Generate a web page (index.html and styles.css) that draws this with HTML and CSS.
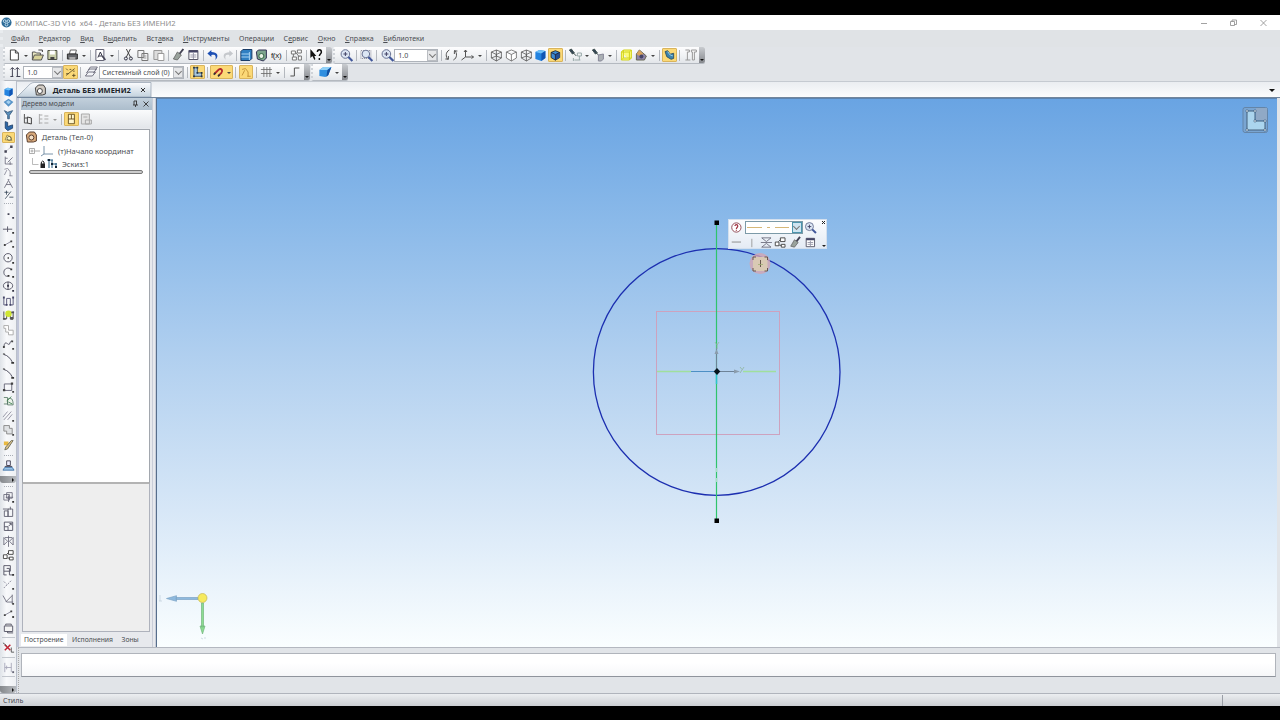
FILE: index.html
```
<!DOCTYPE html>
<html lang="ru">
<head>
  <meta charset="UTF-8" />
  <meta name="viewport" content="width=device-width, initial-scale=1.0"/>
  <title>КОМПАС-3D V16 x64 - Деталь БЕЗ ИМЕНИ2</title>
  <link rel="stylesheet" href="styles.css">
</head>
<body>

  <!-- icon set -->
  <svg class="defs" viewBox="0 0 14 14">
    <symbol id="new" viewBox="0 0 14 14"><path d="M3 2h5l3 3v7H3zM8 2v3h3" fill="#fff" stroke="#444"/></symbol>
    <symbol id="open" viewBox="0 0 14 14"><path d="M2 12V4h3l1 1h4v2" fill="#e8e6c0" stroke="#555"/><path d="M2 12l2-5h9l-2 5z" fill="#d8d39a" stroke="#555"/><path d="M8 2h4v2" fill="none" stroke="#444"/></symbol>
    <symbol id="save" viewBox="0 0 14 14"><path d="M2.500 2.500h9v9h-9z" fill="#c8cda8" stroke="#4d5045"/><path d="M4.500 2.500h5v4h-5z" fill="#fff"/><path d="M5 9h4v3H5z" fill="#444"/></symbol>
    <symbol id="print" viewBox="0 0 14 14"><path d="M5 2h6l-1 4H4z" fill="#fff" stroke="#666"/><path d="M2 6h10v5H2z" fill="#66686c" stroke="#333"/><path d="M4 9h6v3H4z" fill="#aaa"/></symbol>
    <symbol id="preview" viewBox="0 0 14 14"><path d="M2.500 1.500h8v11h-8z" fill="#fff" stroke="#667"/><path d="M4.500 9.500L7 4l2.500 5.500M5.500 8h3" fill="none" stroke="#334"/><path d="M9 8l3 4" stroke="#445" stroke-width="1.500"/></symbol>
    <symbol id="cut" viewBox="0 0 14 14"><path d="M5 1l4 8M9 1L5 9" stroke="#444" fill="none"/><circle cx="4.500" cy="10.500" r="1.500" fill="none" stroke="#334"/><circle cx="9.500" cy="10.500" r="1.500" fill="none" stroke="#334"/></symbol>
    <symbol id="copy" viewBox="0 0 14 14"><path d="M1.500 2.500h6v7h-6zM5.500 5.500h6v7h-6z" fill="#f4f4f6" stroke="#777"/><path d="M7 8h3M7 10h3" stroke="#999"/></symbol>
    <symbol id="paste" viewBox="0 0 14 14"><path d="M2.500 2.500h8v9h-8z" fill="#ddd" stroke="#999"/><path d="M6.500 5.500h6v7h-6z" fill="#fff" stroke="#999"/></symbol>
    <symbol id="brush" viewBox="0 0 14 14"><path d="M12 1L8 6" stroke="#445" stroke-width="2"/><path d="M6 4l4 3-4 5-4-1z" fill="#99a29c" stroke="#555" stroke-width=".7"/></symbol>
    <symbol id="table" viewBox="0 0 14 14"><path d="M2.500 2.500h9v9h-9z" fill="#fff" stroke="#556"/><path d="M2.500 3.500h9" stroke="#446" stroke-width="2"/><path d="M4 7h6M4 9h6M7 5v6" stroke="#99a"/></symbol>
    <symbol id="undo" viewBox="0 0 14 14"><path d="M5 2L1 5.500 5 9V7c4-1 5 1 4 5 4-4 2-8-4-8z" fill="#1c4fb4"/></symbol>
    <symbol id="redo" viewBox="0 0 14 14"><path d="M9 2l4 3.500L9 9V7C5 6 4 8 5 12 1 8 3 4 9 4z" fill="#c5c8cc"/></symbol>
    <symbol id="book" viewBox="0 0 14 14"><path d="M1.500 3.500l2-2h9v9l-2 2h-9z" fill="#2f7fc2" stroke="#1b3c66"/><path d="M2 6h8M2 9h8M10 4v8" stroke="#a8d4f4"/></symbol>
    <symbol id="gears" viewBox="0 0 14 14"><path d="M2 4l2-2h8v8l-3 3-6-2z" fill="#7da58e" stroke="#335"/><circle cx="7" cy="8" r="2.500" fill="#e8f2e4" stroke="#364"/></symbol>
    <symbol id="links" viewBox="0 0 14 14"><path d="M2 3h4v3H2zM8 2h4v3H8zM3 9h4v3H3zM9 8h3v4H9zM6 4l4 5M4 6v3" fill="#fff" stroke="#777"/></symbol>
    <symbol id="help" viewBox="0 0 14 14"><path d="M1 1v9l2-2 2 4 1-1-1-3h2z" fill="#111"/><path d="M8 4c0-3 4-3 4 0 0 2-2 2-2 4M10 10v2" fill="none" stroke="#111" stroke-width="1.500"/></symbol>
    <symbol id="zoom" viewBox="0 0 14 14"><circle cx="6" cy="6" r="4.300" fill="#dce6f4" stroke="#6a7494"/><path d="M9 9l4 4" stroke="#41579a" stroke-width="2.200"/><path d="M4 6h4M6 4v4" stroke="#446"/></symbol>
    <symbol id="zoomrect" viewBox="0 0 14 14"><path d="M1.500 2.500h10v8h-10z" fill="none" stroke="#889" stroke-dasharray="1 1"/><circle cx="6.500" cy="6" r="3.800" fill="#dce6f4" stroke="#6a7494"/><path d="M9 9l4 4" stroke="#41579a" stroke-width="2.200"/></symbol>
    <symbol id="rotate" viewBox="0 0 14 14"><path d="M5 2C1 4 1 9 4 12M9 12c4-2 4-7 1-10M1 11h3V8M13 3h-3v3" fill="none" stroke="#555"/></symbol>
    <symbol id="axes" viewBox="0 0 14 14"><path d="M5 2v7h8M5 9l-4 3M3.500 4L5 2l1.500 2M11 7.500L13 9l-2 1.500" fill="none" stroke="#555"/></symbol>
    <symbol id="wire" viewBox="0 0 14 14"><path d="M2 4l5-2 5 2v6l-5 3-5-3zM2 4l5 2.500L12 4M7 6.500V13M7 2v6l-5 2M7 8l5 2" fill="none" stroke="#555" stroke-width=".8"/></symbol>
    <symbol id="cube" viewBox="0 0 14 14"><path d="M2 4l5-2 5 2v6l-5 3-5-3zM2 4l5 2.500L12 4M7 6.500V13" fill="#fff" stroke="#666" stroke-width=".8"/></symbol>
    <symbol id="solid" viewBox="0 0 14 14"><path d="M2 4l4-2 6 1v7l-4 3-6-2z" fill="#2383e0"/><path d="M2 4l4-2 6 1-4 2.500z" fill="#6fc0f8"/><path d="M8 5.500L12 3v7l-4 3z" fill="#1155b4"/></symbol>
    <symbol id="shell" viewBox="0 0 14 14"><path d="M1 5l4-3h8l-3 8-3 2-6-1z" fill="#2f8fe0"/><path d="M1 5l4-3h8l-4 3z" fill="#8fd0f8"/><path d="M9 5l4-3-3 8-2 2z" fill="#124fa0"/></symbol>
    <symbol id="solidedge" viewBox="0 0 14 14"><path d="M2 4l5-2 5 2v6l-5 3-5-3z" fill="#3b8ad4" stroke="#222"/><path d="M7 6.500L12 4v6l-5 3z" fill="#234d92"/><path d="M2 4l5 2.500L12 4M7 6.500V13" fill="none" stroke="#223"/></symbol>
    <symbol id="pin1" viewBox="0 0 14 14"><path d="M1 2l2-1 3 4-2 1zM5 5l3 3" fill="#345" stroke="#455"/><path d="M9 5h4v3H9zM11 8v4M6 12h6M5 10v3" fill="none" stroke="#9aa"/></symbol>
    <symbol id="pin2" viewBox="0 0 14 14"><path d="M1 2l2-1 3 4-2 1zM5 5l2 2" fill="#345" stroke="#455"/><path d="M7 7l5-1v5l-2 2H7z" fill="#aab0b4" stroke="#889"/></symbol>
    <symbol id="yellow" viewBox="0 0 14 14"><path d="M2 4l2-2h8v8l-2 2H2zM2 4h8v8M10 4l2-2M4 2v8h8M4 10l-2 2" fill="#fbfb7a" stroke="#d2d21a"/></symbol>
    <symbol id="section" viewBox="0 0 14 14"><path d="M2 6l3-4 7 6-2 4H2z" fill="#8d84a8" stroke="#665"/><path d="M2 6l3-4 4 4-4 2z" fill="#d9a35c"/><circle cx="7" cy="8.500" r="2" fill="#446"/></symbol>
    <symbol id="part" viewBox="0 0 14 14"><path d="M2 3l3-1 3 4 4-1v6l-3 1-5-3z" fill="#3b82ac" stroke="#2a4c60"/><path d="M5 3l3 4 3 1" stroke="#a8dcf0" fill="none"/></symbol>
    <symbol id="caliper" viewBox="0 0 14 14"><path d="M2 2h4v2H4v8M8 2h5v2h-2v8H9V4H8zM2 12h5" fill="#f5f5f5" stroke="#999"/></symbol>
    <symbol id="step" viewBox="0 0 14 14"><path d="M4 3v9M9 3v9M2 4.500l2-2 2 2M7 4.500l2-2 2 2M2 11.500h3M8 11.500h4" fill="none" stroke="#445"/></symbol>
    <symbol id="snap" viewBox="0 0 14 14"><path d="M2 11l10-8M2 3l2 2M9 11h4M11 9v4M2 9h3M6 4h2M10 6h2" stroke="#5b4c28" fill="none"/></symbol>
    <symbol id="layers" viewBox="0 0 14 14"><path d="M1 11l3-4h7l-3 4zM2 8l3-4h7l-3 4M4 5l2-3h7l-2 3" fill="#f2f4f8" stroke="#667" stroke-width=".9"/></symbol>
    <symbol id="sketch" viewBox="0 0 14 14"><path d="M3 2v10h9V8H7V2z" fill="#a8c8e0" stroke="#345"/><path d="M2 1h2v2H2zM6 1h2v2H6zM6 7h2v2H6zM11 7h2v2h-2zM2 11h2v2H2zM11 11h2v2h-2z" fill="#234"/></symbol>
    <symbol id="magnet" viewBox="0 0 14 14"><path d="M3 9l5-5c3-2 5 2 3 4l-3 3" fill="none" stroke="#b4282a" stroke-width="2.200"/><path d="M2 10l2-2M7 12l2-2" stroke="#333" stroke-width="2"/></symbol>
    <symbol id="angle" viewBox="0 0 14 14"><path d="M2 4l4-1 3 4v5M5 5l-3 6M8 12h4" fill="none" stroke="#b8842a" stroke-width=".9"/></symbol>
    <symbol id="anglegrey" viewBox="0 0 14 14"><path d="M2 4l4-1 3 4v5M5 5l-3 6M8 12h4" fill="none" stroke="#778" stroke-width=".9"/></symbol>
    <symbol id="grid" viewBox="0 0 14 14"><path d="M4.500 2v10M7.500 2v10M10.500 2v10M1.500 4.500h11M1.500 8.500h11" stroke="#666" stroke-width=".8"/></symbol>
    <symbol id="ortho" viewBox="0 0 14 14"><path d="M3 11h4V3h5" fill="none" stroke="#555"/></symbol>
    <symbol id="surf" viewBox="0 0 14 14"><path d="M1 6l6-4 6 4-6 6z" fill="#5894c8"/><path d="M4 6l3-2 3 2-3 3z" fill="#a4d0f0"/></symbol>
    <symbol id="funnel" viewBox="0 0 14 14"><path d="M2 2l4 2 6-2-4 6v4H6V8z" fill="#5a92be" stroke="#357"/></symbol>
    <symbol id="bend" viewBox="0 0 14 14"><path d="M3 2l3 1v5l6-2v4l-6 3-3-3z" fill="#2b68aa" stroke="#1d3d66"/></symbol>
    <symbol id="geom" viewBox="0 0 14 14"><path d="M2 10l3-7 5 3 2 5z" fill="#fff8c0" stroke="#776633"/><circle cx="8" cy="8" r="3" fill="none" stroke="#554"/></symbol>
    <symbol id="pts" viewBox="0 0 14 14"><path d="M3 11l8-7" stroke="#778" stroke-dasharray="1 1"/><path d="M2 9h3v3H2zM9 3h3v3H9z" fill="#445"/></symbol>
    <symbol id="dims" viewBox="0 0 14 14"><path d="M3 2v9h9M6 9l6-6M3 4h3M9 8v4" fill="none" stroke="#667"/></symbol>
    <symbol id="compass" viewBox="0 0 14 14"><path d="M2 12l5-9 5 9M4 8h6M6 2h2" fill="none" stroke="#667"/></symbol>
    <symbol id="pm" viewBox="0 0 14 14"><path d="M2 4h5M4.500 2v5M3 12l7-9M8 10h5" stroke="#345" fill="none"/></symbol>
    <symbol id="dot" viewBox="0 0 14 14"><path d="M6 6h2v2H6zM11 10h2v2h-2z" fill="#445"/></symbol>
    <symbol id="hline" viewBox="0 0 14 14"><path d="M1 7h10M6 4v6" stroke="#556"/><path d="M11 10h2v2h-2z" fill="#333"/></symbol>
    <symbol id="seg" viewBox="0 0 14 14"><path d="M3 9l7-4" stroke="#889"/><path d="M2 8h2v2H2zM9 4h2v2H9zM11 10h2v2h-2z" fill="#444"/></symbol>
    <symbol id="circ" viewBox="0 0 14 14"><circle cx="6.500" cy="6.500" r="4.500" fill="none" stroke="#556"/><path d="M6 6h1.500v1.500H6zM11 11h2v2h-2z" fill="#333"/></symbol>
    <symbol id="arc" viewBox="0 0 14 14"><path d="M10 4C7 1 2 3 2 7s3 5 5 4" fill="none" stroke="#556"/><path d="M9 3h2v2H9zM6 10h2v2H6zM11 11h2v2h-2z" fill="#333"/></symbol>
    <symbol id="ell" viewBox="0 0 14 14"><ellipse cx="6.500" cy="6.500" rx="5" ry="4" fill="none" stroke="#556"/><path d="M6.500 2v9" stroke="#556"/><path d="M5.500 5.500h2v2h-2zM11 11h2v2h-2z" fill="#334"/></symbol>
    <symbol id="contour" viewBox="0 0 14 14"><path d="M2 3v8h3V4h4v7h3V3" fill="none" stroke="#557"/><path d="M1 2h2v2H1zM11 2h2v2h-2zM4 10h2v2H4zM8 10h2v2H8z" fill="#446"/></symbol>
    <symbol id="lime" viewBox="0 0 14 14"><path d="M2 3v8h3V5h4v6h3V3" fill="none" stroke="#444"/><circle cx="7" cy="5.500" r="3.500" fill="#d0e632"/><path d="M1 10h3v2H1zM9 9h3v3H9zM10 3h3v2h-3z" fill="#555"/></symbol>
    <symbol id="offset" viewBox="0 0 14 14"><path d="M2 2h5v5h5v5H7V9H4V5H2z" fill="#fff" stroke="#aaa"/></symbol>
    <symbol id="spline" viewBox="0 0 14 14"><path d="M2 10c1-9 5-1 6-3s1-4 3-3" fill="none" stroke="#556"/><path d="M1 9h2v2H1zM10 3h2v2h-2zM11 11h2v2h-2z" fill="#444"/></symbol>
    <symbol id="fillet" viewBox="0 0 14 14"><path d="M2 3c4 1 7 4 9 8" fill="none" stroke="#445"/><path d="M1 2h2v1H1zM10 11h3v2h-3z" fill="#333"/></symbol>
    <symbol id="rect" viewBox="0 0 14 14"><path d="M2.500 3.500h8v7h-8z" fill="none" stroke="#667"/><path d="M1 9h2.500v2.500H1zM9.500 2H12v2.500H9.500zM11 11h2v2h-2z" fill="#444"/></symbol>
    <symbol id="copyg" viewBox="0 0 14 14"><path d="M2 3h4v7H2M6 5c4-3 6 0 6 6H6z" fill="#eef3ec" stroke="#576" stroke-width=".9"/><path d="M5 7l5-5M7 8l4 2" stroke="#485"/></symbol>
    <symbol id="hatch" viewBox="0 0 14 14"><path d="M1 8l5-6M2 11l8-9M6 11l5-6" stroke="#889" stroke-width=".9"/><path d="M11 11h2v2h-2z" fill="#444"/></symbol>
    <symbol id="union" viewBox="0 0 14 14"><path d="M2 2h6v3h3v6H5V8H2z" fill="#e0e2e4" stroke="#888"/><path d="M11 11h2v2h-2z" fill="#444"/></symbol>
    <symbol id="pencil" viewBox="0 0 14 14"><path d="M2 3h5v4H2z" fill="#e9b941"/><path d="M12 2L6 11l-3 1 1-3 6-7z" fill="#d8c088" stroke="#665" stroke-width=".9"/></symbol>
    <symbol id="stamp" viewBox="0 0 14 14"><path d="M1 12l2-3h8l2 3z" fill="#9cc4e8" stroke="#47a"/><path d="M5 2h4v5H5zM3 8h8" fill="#eef" stroke="#445"/></symbol>
    <symbol id="mv" viewBox="0 0 14 14"><path d="M2 4h6v6H2zM5 2h6v6H5zM7 5v7M4 7h8" fill="none" stroke="#667" stroke-width=".9"/><path d="M11 11h2v2h-2z" fill="#333"/></symbol>
    <symbol id="rot" viewBox="0 0 14 14"><path d="M2.500 5.500h4v6h-4zM6.500 3.500h5v8h-5zM1 3.500h6M9 1v3" fill="none" stroke="#556" stroke-width=".9"/></symbol>
    <symbol id="scale" viewBox="0 0 14 14"><path d="M2.500 2.500h9v9h-9zM2.500 7.500h4v4M7 7l3-3M8 4h2v2" fill="none" stroke="#556"/></symbol>
    <symbol id="mirror" viewBox="0 0 14 14"><path d="M2 2h10L7 6zM2 12h10L7 8zM1 7h12" fill="none" stroke="#667" stroke-width=".9"/></symbol>
    <symbol id="mirrorv" viewBox="0 0 14 14"><path d="M2 3v8l4-4zM12 3v8L8 7zM3 3h8M7 1v12" fill="none" stroke="#667" stroke-width=".9"/></symbol>
    <symbol id="arr" viewBox="0 0 14 14"><path d="M7 2h5v4H7zM1.500 6.500h4v4h-4zM8 9h4v3H8zM5 6l2-2M6 10h2" fill="#fff" stroke="#444"/></symbol>
    <symbol id="deform" viewBox="0 0 14 14"><path d="M2 2h7v6H2zM5 5h3v7h4M2 8v4h3" fill="none" stroke="#556"/><path d="M11 11h2v2h-2z" fill="#333"/></symbol>
    <symbol id="trim" viewBox="0 0 14 14"><path d="M2 11l8-8M2 4l3 3" stroke="#889" stroke-dasharray="2 1"/><path d="M11 11h2v2h-2z" fill="#444"/></symbol>
    <symbol id="extend" viewBox="0 0 14 14"><path d="M1 3l4 7h7M11 2v10M4 10l7-7" fill="none" stroke="#667" stroke-width=".9"/><path d="M11 11h2v2h-2z" fill="#444"/></symbol>
    <symbol id="box" viewBox="0 0 14 14"><path d="M2.500 4.500h9v6h-9zM4 4V2.500h6V4M6 10v2h6" fill="#f4f4f4" stroke="#556"/></symbol>
    <symbol id="del" viewBox="0 0 14 14"><path d="M3 4l6 6M9 4l-6 6" stroke="#c02434" stroke-width="1.600"/><path d="M1 2l4 3M10 7v5h3" stroke="#555" fill="none"/></symbol>
    <symbol id="meas" viewBox="0 0 14 14"><path d="M3 2v10M10 2v10M3 7h7M5 5v4" stroke="#aab" fill="none"/><path d="M11 11h2v2h-2z" fill="#667"/></symbol>
    <symbol id="detail" viewBox="0 0 14 14"><path d="M2 5l3-3h5l2 3v6l-3 1H3z" fill="#d2ccc4" stroke="#444"/><circle cx="6.500" cy="8" r="2.500" fill="#fff" stroke="#444"/></symbol>
    <symbol id="tree" viewBox="0 0 14 14"><path d="M3 2v9h4M3 6h3" fill="none" stroke="#555"/><path d="M6 5l4 1v6l-4-1z" fill="#eee" stroke="#444"/></symbol>
    <symbol id="list" viewBox="0 0 14 14"><path d="M3 2v10M3 3h3M3 7h3M3 11h3M8 4h4M8 7h4M8 11h4" stroke="#aaa"/></symbol>
    <symbol id="doc" viewBox="0 0 14 14"><path d="M3.500 1.500h7v11h-7z" fill="#fff6cc" stroke="#5d4514"/><path d="M3.500 7h7M7 2v5" stroke="#5d4514"/></symbol>
    <symbol id="binoc" viewBox="0 0 14 14"><path d="M2 2h8v10H2zM4 5h4M6 8h6v4H6z" fill="#e4e4e4" stroke="#aaa"/></symbol>
  </svg>

  <div class="window">
    <div class="titlebar">
      <svg class="logo" viewBox="0 0 12 12"><circle cx="6" cy="6" r="5.500" fill="#2d6c98"/><circle cx="4" cy="4.500" r="1.500" fill="none" stroke="#cfe6f4"/><circle cx="8" cy="4.500" r="1.500" fill="none" stroke="#cfe6f4"/><circle cx="6" cy="8.300" r="1.500" fill="none" stroke="#cfe6f4"/></svg>
      <span class="title">КОМПАС-3D V16&nbsp; x64 - Деталь БЕЗ ИМЕНИ2</span>
      <svg class="winbtns" viewBox="0 0 70 10"><path d="M0 5.500h6M29.500 3.500h4v4h-4zM31 3.500V2h4.500v4.500h-2M59.500 2l6 6M65.500 2l-6 6" fill="none" stroke="#8a8a8a" stroke-width=".8"/></svg>
    </div>

    <div class="menubar">
      <span><u>Ф</u>айл</span><span><u>Р</u>едактор</span><span><u>В</u>ид</span><span>В<u>ы</u>делить</span><span>Вст<u>а</u>вка</span><span><u>И</u>нструменты</span><span>Операции</span><span>С<u>е</u>рвис</span><span><u>О</u>кно</span><span><u>С</u>правка</span><span><u>Б</u>иблиотеки</span>
    </div>

    <div class="toolrow">
      <div class="toolbar standard">
        <svg class="i"><use href="#new"/></svg><b class="dd"></b>
        <svg class="i"><use href="#open"/></svg>
        <svg class="i"><use href="#save"/></svg><b class="sep"></b>
        <svg class="i"><use href="#print"/></svg><b class="dd"></b><b class="sep"></b>
        <svg class="i"><use href="#preview"/></svg><b class="dd"></b><b class="sep"></b>
        <svg class="i"><use href="#cut"/></svg>
        <svg class="i"><use href="#copy"/></svg>
        <svg class="i"><use href="#paste"/></svg><b class="sep"></b>
        <svg class="i"><use href="#brush"/></svg>
        <svg class="i"><use href="#table"/></svg><b class="sep"></b>
        <svg class="i"><use href="#undo"/></svg>
        <svg class="i narrow"><use href="#redo"/></svg><b class="sep"></b>
        <svg class="i"><use href="#book"/></svg>
        <svg class="i"><use href="#gears"/></svg>
        <span class="fx">f(x)</span><b class="sep"></b>
        <svg class="i"><use href="#links"/></svg><b class="sep"></b>
        <svg class="i"><use href="#help"/></svg>
        <b class="cap"></b>
      </div>
      <div class="toolbar view">
        <svg class="i"><use href="#zoom"/></svg><b class="sep"></b>
        <svg class="i"><use href="#zoomrect"/></svg><b class="sep"></b>
        <svg class="i"><use href="#zoom"/></svg>
        <span class="combo scale">1.0<b class="drop"></b></span><b class="sep"></b>
        <svg class="i"><use href="#rotate"/></svg>
        <svg class="i wide"><use href="#axes"/></svg><b class="dd"></b><b class="sep"></b>
        <svg class="i"><use href="#wire"/></svg>
        <svg class="i"><use href="#cube"/></svg>
        <svg class="i"><use href="#wire"/></svg>
        <svg class="i"><use href="#solid"/></svg>
        <svg class="i on"><use href="#solidedge"/></svg><b class="sep"></b>
        <svg class="i"><use href="#pin1"/></svg><b class="dd"></b>
        <svg class="i"><use href="#pin2"/></svg><b class="dd"></b><b class="sep"></b>
        <svg class="i"><use href="#yellow"/></svg>
        <svg class="i"><use href="#section"/></svg><b class="dd"></b><b class="sep"></b>
        <svg class="i on"><use href="#part"/></svg><b class="sep"></b>
        <svg class="i"><use href="#caliper"/></svg>
        <b class="cap"></b>
      </div>
    </div>

    <div class="toolrow">
      <div class="toolbar current">
        <svg class="i"><use href="#step"/></svg>
        <span class="combo stepbox">1.0<b class="drop"></b></span>
        <svg class="i on"><use href="#snap"/></svg><b class="sep"></b>
        <svg class="i"><use href="#layers"/></svg>
        <span class="combo layer">Системный слой (0)<b class="drop"></b></span><b class="sep"></b>
        <svg class="i on"><use href="#sketch"/></svg><b class="sep"></b>
        <span class="i on split"><svg class="i"><use href="#magnet"/></svg><b class="dd"></b></span><b class="sep"></b>
        <svg class="i on"><use href="#angle"/></svg><b class="sep"></b>
        <svg class="i"><use href="#grid"/></svg><b class="dd"></b><b class="sep"></b>
        <svg class="i"><use href="#ortho"/></svg>
        <b class="cap"></b>
      </div>
      <div class="toolbar shade">
        <svg class="i"><use href="#shell"/></svg><b class="dd"></b>
        <b class="cap"></b>
      </div>
    </div>

    <div class="workspace">
      <div class="compact">
        <div class="switches">
          <svg class="s"><use href="#solid"/></svg>
          <svg class="s"><use href="#surf"/></svg>
          <svg class="s"><use href="#funnel"/></svg>
          <svg class="s"><use href="#bend"/></svg>
          <svg class="s on"><use href="#geom"/></svg>
          <svg class="s"><use href="#pts"/></svg>
          <svg class="s"><use href="#dims"/></svg>
          <svg class="s"><use href="#anglegrey"/></svg>
          <svg class="s"><use href="#compass"/></svg>
          <svg class="s"><use href="#pm"/></svg>
        </div>
        <b class="grip"></b>
        <div class="tools geometry">
          <svg class="s"><use href="#dot"/></svg>
          <svg class="s"><use href="#hline"/></svg>
          <svg class="s"><use href="#seg"/></svg>
          <svg class="s"><use href="#circ"/></svg>
          <svg class="s"><use href="#arc"/></svg>
          <svg class="s"><use href="#ell"/></svg>
          <svg class="s"><use href="#contour"/></svg>
          <svg class="s"><use href="#lime"/></svg>
          <svg class="s"><use href="#offset"/></svg>
          <svg class="s"><use href="#spline"/></svg>
          <svg class="s"><use href="#fillet"/></svg>
          <svg class="s"><use href="#fillet"/></svg>
          <svg class="s"><use href="#rect"/></svg>
          <svg class="s"><use href="#copyg"/></svg>
          <svg class="s"><use href="#hatch"/></svg>
          <svg class="s"><use href="#union"/></svg>
          <svg class="s"><use href="#pencil"/></svg>
        </div>
        <b class="grip"></b>
        <svg class="s stamp"><use href="#stamp"/></svg>
        <b class="endcap"></b>
        <b class="grip"></b>
        <div class="tools editing">
          <svg class="s"><use href="#mv"/></svg>
          <svg class="s"><use href="#rot"/></svg>
          <svg class="s"><use href="#scale"/></svg>
          <svg class="s"><use href="#mirrorv"/></svg>
          <svg class="s"><use href="#arr"/></svg>
          <svg class="s"><use href="#deform"/></svg>
          <svg class="s"><use href="#trim"/></svg>
          <svg class="s"><use href="#extend"/></svg>
          <svg class="s"><use href="#seg"/></svg>
          <svg class="s"><use href="#box"/></svg>
        </div>
        <div class="single"><svg class="s"><use href="#del"/></svg></div>
        <div class="single last"><svg class="s"><use href="#meas"/></svg></div>
        <b class="endcap bottom"></b>
      </div>

      <div class="area">
        <div class="doctabs">
          <svg class="tabshape" viewBox="0 0 134 15" preserveAspectRatio="none"><defs><linearGradient id="tg" x2="0" y2="1"><stop stop-color="#fbfcfe"/><stop offset="1" stop-color="#c3d2de"/></linearGradient></defs><path d="M0 15L13 2q2-1.500 4-1.500h116V15z" fill="url(#tg)" stroke="#9aa6b4" stroke-width=".8"/></svg>
          <div class="doctab">
            <svg class="i"><use href="#detail"/></svg>
            <span>Деталь БЕЗ ИМЕНИ2</span>
            <svg class="x" viewBox="0 0 6 6"><path d="M1 1l4 4M5 1L1 5" stroke="#333"/></svg>
          </div>
          <b class="dd more"></b>
        </div>

        <div class="docbody">
          <div class="treepanel">
            <div class="panelhead">
              <span>Дерево модели</span>
              <svg viewBox="0 0 18 8"><path d="M3 1v4M5.500 1v4M2 5h5M3 1h3M4.500 5v2M12.500 1.500l5 5M17.500 1.500l-5 5" fill="none" stroke="#333" stroke-width=".9"/></svg>
            </div>
            <div class="treetools">
              <svg class="i"><use href="#tree"/></svg>
              <svg class="i"><use href="#list"/></svg><b class="dd grey"></b><b class="sep"></b>
              <svg class="i on"><use href="#doc"/></svg>
              <svg class="i"><use href="#binoc"/></svg>
            </div>
            <div class="tree">
              <div class="node"><svg class="i root" viewBox="0 0 14 14"><path d="M2 5l3-3h5l2 3v6l-3 1H3z" fill="#d9aa7c" stroke="#5b4030"/><circle cx="7" cy="7.500" r="2.500" fill="#f2dfc8" stroke="#5b4030"/></svg><span>Деталь (Тел-0)</span></div>
              <div class="node origin"><svg viewBox="0 0 26 12"><path d="M.5 3.500h5v5h-5zM1.500 6h3M3 4.500v3M6 6h5" fill="none" stroke="#999" stroke-width=".8"/><path d="M15 1v8h9M15 9l-3 2" fill="none" stroke="#6c88a0" stroke-width=".9"/></svg><span>(т)Начало координат</span></div>
              <div class="node sketch"><svg viewBox="0 0 30 12"><path d="M3.500 0v6.500h6" fill="none" stroke="#aaa" stroke-width=".8"/><path d="M11.500 5.500h4.500v4.500h-4.500z" fill="#222"/><path d="M12.400 6V4q1.300-2 2.600 0v2" fill="none" stroke="#222"/><path d="M20 2v8M18 2h6M23 2v8M23 6h5M27 5v5" stroke="#235a80" fill="none"/><path d="M19 1h2v2h-2zM22 5h2v2h-2zM26 8h2v2h-2z" fill="#123"/></svg><span>Эскиз:1</span></div>
              <div class="rollback"></div>
            </div>
            <div class="treelower"></div>
            <div class="treetabs"><span class="active">Построение</span><span>Исполнения</span><span>Зоны</span></div>
          </div>

          <div class="canvas">
            <!-- viewBox is in window coordinates -->
            <svg class="scene" viewBox="156 98 1121 549">
              <g fill="none">
                <rect x="656.500" y="311.500" width="123" height="123" stroke="#cda2be"/>
                <path d="M657 371.500h34M743 371.500h33" stroke="#a0df9c" stroke-width="1.600"/>
                <circle cx="716.700" cy="372" r="123.300" stroke="#1c2fb0" stroke-width="1.300"/>
                <path d="M716.500 223v298" stroke="#2fc46c" stroke-width="1.200"/>
                <path d="M716.500 468v4M716.500 478v4" stroke="#a7dfc4" stroke-width="1.500"/>
                <path d="M691 371.500h25" stroke="#4d8fc4"/>
                <path d="M716 371.500h22M716.500 372v-24" stroke="#6e8398"/>
                <path d="M716.500 372v12" stroke="#2cc4cc" stroke-width="1.500"/>
                <path d="M734 369.500l6 2-6 2zM714.500 354l2-5 2 5z" fill="#8b9cac"/>
                <path d="M740 367l2 2.500M744 367l-4 6M715 342l2 3 2-3M717 345v4" stroke="#8fb59a" stroke-width=".8"/>
              </g>
              <path d="M714.500 220.500h4.500v4.500h-4.500zM714.500 518.500h4.500v4.500h-4.500z" fill="#000"/>
              <path d="M717 368l3.300 3.500-3.300 3.500-3.300-3.500z" fill="#06141c"/>

              <circle cx="760" cy="263.500" r="10.500" fill="#d5a5b2" opacity=".8"/>
              <path d="M753 257h14.500v14H753z" fill="#d9c9b4"/>
              <path d="M753 260v-3h3M764.500 257h3v3M753 268v3h3M764.500 271h3v-3M760.500 260v7" fill="none" stroke="#5b4a44" stroke-width=".9"/>
              <path d="M758 264.500h5" stroke="#9eae72" stroke-width=".8"/>

              <g stroke="#9aa7ae" stroke-width=".7">
                <path d="M176 597.500h22v2h-22zM166.500 598.500l10-2.800v5.600z" fill="#8db9de" stroke="#7da4c4"/>
                <path d="M201.500 603h2v24h-2zM202.500 634l-2.500-8h5z" fill="#8bdd92" stroke="#74b47e"/>
                <circle cx="202.500" cy="598" r="4.500" fill="#f6ea5e" stroke="#c2b458"/>
                <path d="M160 595v6M159 601h3M201 638l2 1M205 637v2" fill="none" stroke="#c0cfda"/>
              </g>

              <rect x="1243" y="107.500" width="24.500" height="25" rx="2" fill="#79a5d2" stroke="#6485a8"/>
              <path d="M1256 108h11v12h-11z" fill="#90a9c6"/>
              <path d="M1247 111h8v10h10v9h-18z" fill="#abd5ee" stroke="#45607c"/>
              <path d="M1246 110h2v2h-2zM1254 110h2v2h-2zM1254 120h2v2h-2zM1264 120h2v2h-2zM1246 129h2v2h-2zM1264 129h2v2h-2z" fill="#e4f2fa" stroke="#39536e" stroke-width=".5"/>
            </svg>

            <div class="minibar">
              <div class="minirow">
                <svg class="i" viewBox="0 0 14 14"><circle cx="7" cy="7" r="5" fill="#fff" stroke="#8d4450"/><path d="M5.500 5.500c0-2 3-2 3 0 0 1.500-1.500 1.500-1.500 3M7 9.500v1" fill="none" stroke="#a03040" stroke-width="1.300"/></svg>
                <div class="linestyle"><svg viewBox="0 0 46 11"><path d="M1 5.500h15M21 5.500h3M29 5.500h14" stroke="#d6b778" stroke-width="1.200"/></svg><b class="drop blue"></b></div>
                <svg class="i"><use href="#zoom"/></svg>
              </div>
              <div class="minirow">
                <svg class="i" viewBox="0 0 14 14"><path d="M2 6.500h10" stroke="#888"/></svg>
                <svg class="i" viewBox="0 0 14 14"><path d="M7.500 3v9" stroke="#999"/></svg>
                <svg class="i"><use href="#mirror"/></svg>
                <svg class="i"><use href="#arr"/></svg>
                <svg class="i"><use href="#brush"/></svg>
                <svg class="i"><use href="#table"/></svg>
              </div>
              <svg class="miniedge" viewBox="0 0 6 28"><path d="M1 1l3 3M4 1L1 4" stroke="#222"/><path d="M1 25h4l-2 2z" fill="#222"/></svg>
            </div>
          </div>
        </div>

        <div class="props"><div class="propsbox"></div></div>
      </div>
    </div>

    <div class="statusbar"><span>Стиль</span></div>
  </div>

</body>
</html>
```

FILE: styles.css
```
* {
  box-sizing: border-box;
}

body {
  margin: 0;
  background: #000;
  height: 720px;
  overflow: hidden;
  padding-top: 14px;
  font-family: 'Noto Sans', 'Open Sans', sans-serif;
  font-size: 7.1px;
  line-height: 10px;
  color: #4a4d52;
}

svg {
  display: block;
  flex: none;
}

.defs {
  width: 0;
  height: 0;
  position: absolute;
}

.window {
  width: 1280px;
  height: 692px;
  background: #e1e4e8;
  display: flex;
  flex-direction: column;
}

/* title and menu */
.titlebar {
  height: 16px;
  background: #fff;
  display: flex;
  align-items: center;
  padding: 0 13px 0 1px;
  border-top: 1px solid #000;
}

.logo {
  width: 11px;
  height: 11px;
}

.title {
  margin-left: 3px;
  font-size: 7.7px;
  color: #8d8d8d;
  white-space: nowrap;
}

.winbtns {
  width: 70px;
  height: 10px;
  margin-left: auto;
  margin-right: -4px;
}

.menubar {
  height: 17px;
  display: flex;
  align-items: center;
  gap: 9.5px;
  padding-left: 8px;
  padding-bottom: 1px;
  border-left: 3px dotted #e9ecef;
  background: #e0e3e6;
}

.menubar u {
  text-decoration-thickness: 0.5px;
  text-underline-offset: 1px;
}

/* toolbars */
.toolrow {
  height: 17px;
  display: flex;
  gap: 1px;
  padding-left: 3px;
}

.toolbar {
  height: 17px;
  display: flex;
  align-items: center;
  background: linear-gradient(#fdfdfe, #eff1f3 60%, #e2e5e9);
  border-bottom: 1px solid #b4b9c0;
  border-left: 2px dotted #cfd3d8;
  border-radius: 2px;
}

.standard {
  width: 329px;
  padding-left: 2px;
}

.view {
  width: 372px;
  padding-left: 4px;
}

.current {
  width: 307px;
  padding-left: 3px;
}

.shade {
  width: 37px;
  padding-left: 5px;
}

.i {
  width: 14.75px;
  height: 14px;
  flex: none;
}

.i.wide {
  width: 17px;
}

.i.narrow {
  width: 13px;
}

.on {
  background: #fbd977;
  border: 1px solid #d9b45c;
  border-radius: 1px;
}

.fx {
  width: 14.75px;
  text-align: center;
  font: 8px 'Liberation Sans', sans-serif;
  letter-spacing: -0.3px;
  color: #222;
}

.sep {
  width: 1px;
  height: 11px;
  margin: 0 2.25px;
  background: #b4b8be;
  flex: none;
}

.dd {
  width: 8px;
  flex: none;
}

.dd::before {
  content: '';
  display: block;
  width: 0;
  margin: 1px auto 0;
  border: 2px solid transparent;
  border-top: 2px solid #444;
  border-bottom: 0;
}

.dd.grey::before {
  border-top-color: #999;
}

.cap {
  width: 6px;
  height: 16px;
  margin-left: auto;
  background: linear-gradient(#c9ccd0, #85888d);
  border-radius: 0 2px 2px 0;
  display: flex;
  align-items: flex-end;
  justify-content: center;
  padding-bottom: 2px;
}

.cap::before {
  content: '';
  border: 2px solid transparent;
  border-top: 2px solid #111;
  border-bottom: 0;
}

.combo {
  height: 13px;
  border: 1px solid #aeb3ba;
  background: #fff;
  display: flex;
  align-items: center;
  padding-left: 3px;
  flex: none;
  white-space: nowrap;
}

.scale {
  width: 44px;
}

.stepbox {
  width: 40px;
  margin-left: 0.5px;
}

.layer {
  width: 85px;
  margin-left: 1px;
  padding-left: 2px;
}

.drop {
  width: 10px;
  height: 11px;
  margin-left: auto;
  background: #e6e7e9;
  border: 1px solid #babdc2;
  display: flex;
  align-items: center;
  justify-content: center;
  flex: none;
}

.drop::before {
  content: '';
  width: 4px;
  height: 4px;
  margin-top: -2px;
  border: solid #777;
  border-width: 0 1px 1px 0;
  transform: rotate(45deg);
}

.split {
  display: flex;
  align-items: center;
  width: 23px;
}

.split .i {
  width: 14px;
  height: 12px;
}

/* left compact panel */
.workspace {
  flex: 1;
  min-height: 0;
  display: flex;
}

.compact {
  width: 17px;
  padding-top: 5px;
  background: linear-gradient(90deg, #dfe3e8, #f8f9fb 40%, #eef0f3);
  border-right: 1px solid #b9bfca;
  display: flex;
  flex-direction: column;
  align-items: center;
}

.s {
  width: 13px;
  height: 13px;
  flex: none;
}

.switches .s {
  height: 11.45px;
}

.tools .s {
  height: 14.4px;
  padding: 0.5px 0;
}

.editing .s {
  height: 14.55px;
}

.grip {
  width: 9px;
  height: 2px;
  border-top: 1px dotted #a9aeb6;
  margin: 3px 0 2px;
  flex: none;
}

.stamp {
  margin: 0 0 3px;
}

.endcap {
  width: 16px;
  height: 7px;
  background: linear-gradient(90deg, #85888c, #b6b9bd);
  border-radius: 0 0 3px 3px;
  margin-top: 1px;
  flex: none;
  display: flex;
  justify-content: flex-end;
  align-items: center;
  padding-right: 2px;
}

.endcap::before {
  content: '';
  border: 2px solid transparent;
  border-left-color: #111;
  border-right: 0;
}

.single {
  width: 13px;
  height: 20px;
  border-top: 1px solid #c2c6cd;
  padding-top: 3px;
  flex: none;
  margin-top: 2px;
}

.last {
  border-bottom: 1px solid #c2c6cd;
  margin-top: 0;
}

.endcap.bottom {
  margin-top: auto;
}

/* document area */
.area {
  flex: 1;
  min-width: 0;
  display: flex;
  flex-direction: column;
}

.doctabs {
  height: 17px;
  display: grid;
  grid-template-columns: 135px 1fr;
  background: linear-gradient(#eaedf1, #fbfcfd);
  border-top: 1px solid #c5cad1;
  border-bottom: 1px solid #71859c;
}

.tabshape,
.doctab {
  grid-area: 1 / 1;
}

.tabshape {
  width: 135px;
  height: 15px;
}

.doctab {
  display: flex;
  align-items: center;
  padding-left: 16px;
  font-weight: bold;
  font-size: 7.5px;
  color: #20242a;
  white-space: nowrap;
}

.doctab span {
  margin-left: 5px;
}

.x {
  width: 6px;
  height: 6px;
  margin-left: auto;
  margin-right: 6px;
}

.more {
  align-self: center;
  justify-self: end;
  margin-right: 4px;
}

.more::before {
  border-width: 3px 3px 0;
  border-top: 3px solid #111;
}

.docbody {
  height: 549px;
  display: flex;
}

.treepanel {
  width: 139px;
  display: flex;
  flex-direction: column;
  border-left: 2px solid #c0c5d8;
  border-right: 4px double #c9cdd8;
  padding-left: 2px;
  background: #e7e9ed;
}

.panelhead {
  height: 12px;
  display: flex;
  align-items: center;
  justify-content: space-between;
  padding: 0 3px 0 1px;
  background: linear-gradient(#c2d0dc, #acbdcc);
}

.panelhead span {
  font-size: 6.9px;
}

.panelhead svg {
  width: 18px;
  height: 8px;
}

.treetools {
  height: 18px;
  display: flex;
  align-items: center;
  background: linear-gradient(#fafbfc, #e3e6ea);
}

.tree {
  height: 355px;
  margin: 1px 2px 0 1px;
  border: 1px solid #a2a7ae;
  border-bottom: 2px solid #b3b3b3;
  background: #fff;
  font-size: 7.5px;
}

.node {
  height: 13px;
  display: flex;
  align-items: center;
  padding-left: 1px;
  white-space: nowrap;
}

.node span {
  margin-left: 3px;
}

.node:first-child {
  height: 14px;
}

.origin svg {
  width: 26px;
  height: 12px;
  margin-left: 5px;
}

.sketch svg {
  width: 30px;
  height: 12px;
  margin-left: 5px;
}

.sketch span {
  margin-left: 3px;
}

.rollback {
  height: 4px;
  margin: 0 6px;
  border: 1px solid #777;
  border-radius: 2px;
  background: #ccc;
}

.treelower {
  flex: 1;
  margin: 0 2px 0 1px;
  background: #eeeeee;
  border: 1px solid #aeb2bc;
  border-top: 0;
}

.treetabs {
  height: 15px;
  display: flex;
  align-items: center;
  gap: 6.5px;
  font-size: 6.8px;
}

.treetabs span {
  padding: 0 1px;
}

.treetabs .active {
  background: #fff;
  padding: 1px 3px;
  margin-right: -2px;
}

.canvas {
  flex: 1;
  position: relative;
  margin-right: 3px;
  background: linear-gradient(#69a4e3, #8ab9e9 22%, #b5d2f0 50%, #d7e7f7 75%, #fafeff);
  border-left: 1px solid #566e8c;
  border-top: 1px solid #5d83ae;
}

.scene {
  width: 1121px;
  height: 549px;
  margin: -1px 0 0 -1px;
}

/* floating toolbar over the drawing */
.minibar {
  position: absolute;
  left: 571px;
  top: 120px;
  width: 99px;
  height: 30px;
  background: linear-gradient(#fbfcfe, #e4ebf4);
  border: 1px solid #d4e0ee;
}

.minirow {
  height: 15px;
  display: flex;
  align-items: center;
}

.minirow .i {
  height: 13px;
}

.linestyle {
  width: 58px;
  height: 13px;
  margin: 0 0 0 1px;
  display: flex;
  border: 1px solid #7c9aa8;
  background: #fff;
}

.linestyle svg {
  width: 46px;
  height: 11px;
}

.drop.blue {
  background: #cfe5f2;
  border-color: #4d95ad;
}

.miniedge {
  position: absolute;
  right: -1px;
  top: 0;
  width: 6px;
  height: 28px;
}

/* bottom */
.props {
  flex: 1;
  margin-left: 1px;
  padding: 5px 4px 0 2px;
  border-top: 1px solid #b4b8c0;
  border-left: 1px dotted #aaa;
}

.propsbox {
  height: 24px;
  border: 1px solid #b0b4bb;
  border-bottom-color: #8f949c;
  background: linear-gradient(#fff 40%, #f6f7f9);
}

.statusbar {
  height: 13px;
  padding-left: 3px;
  display: flex;
  align-items: center;
  border-top: 1px solid #b0b4bc;
  background: linear-gradient(#eceef1, #cbced3);
}

.statusbar::after {
  content: '';
  width: 1px;
  height: 11px;
  margin-left: auto;
  margin-right: 57px;
  background: #9a9ea6;
}
```
